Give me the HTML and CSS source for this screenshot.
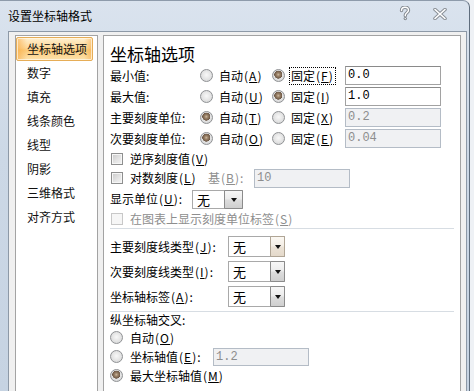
FILE: index.html
```html
<!DOCTYPE html>
<html lang="zh-CN">
<head>
<meta charset="utf-8">
<title>设置坐标轴格式</title>
<link rel="stylesheet" href="styles.css">
</head>
<body>
<div class="window">
  <div class="titlebar">
    <span class="title">设置坐标轴格式</span>
    <div class="caption">
      <svg class="help" width="12" height="15" viewBox="0 0 12 15">
        <path d="M2.5 4.5 C2.5 2 4.2 1.2 6 1.2 C8 1.2 9.5 2.5 9.5 4.3 C9.5 6.5 6.3 7 6.3 9.2 L6.3 9.8" fill="none" stroke="#858b92" stroke-width="3.4" stroke-linecap="round"/>
        <circle cx="6.3" cy="12.6" r="1.7" fill="#858b92"/>
        <path d="M2.5 4.5 C2.5 2 4.2 1.2 6 1.2 C8 1.2 9.5 2.5 9.5 4.3 C9.5 6.5 6.3 7 6.3 9.2 L6.3 9.8" fill="none" stroke="#fff" stroke-width="1.4" stroke-linecap="round"/>
        <circle cx="6.3" cy="12.6" r="0.7" fill="#fff"/>
      </svg>
      <svg class="close" width="14" height="12" viewBox="0 0 14 12">
        <path d="M2 1.5 L12 10.5 M12 1.5 L2 10.5" fill="none" stroke="#8a9097" stroke-width="3.6" stroke-linecap="round"/>
        <path d="M2 1.5 L12 10.5 M12 1.5 L2 10.5" fill="none" stroke="#fff" stroke-width="1.6" stroke-linecap="round"/>
      </svg>
    </div>
  </div>
  <div class="frame">
    <ul class="nav">
      <li class="active">坐标轴选项</li>
      <li>数字</li>
      <li>填充</li>
      <li>线条颜色</li>
      <li>线型</li>
      <li>阴影</li>
      <li>三维格式</li>
      <li>对齐方式</li>
    </ul>
    <div class="panel">
      <h1>坐标轴选项</h1>

      <div class="axrow">
        <span class="lbl">最小值:</span>
        <span class="opt opt1"><span class="radio"></span><span>自动<span class="mn">(<u>A</u>)</span></span></span>
        <span class="opt opt2"><span class="radio on"></span><span class="focus">固定<span class="mn">(<u>F</u>)</span></span></span>
        <span class="field">0.0</span>
      </div>
      <div class="axrow">
        <span class="lbl">最大值:</span>
        <span class="opt opt1"><span class="radio"></span><span>自动<span class="mn">(<u>U</u>)</span></span></span>
        <span class="opt opt2"><span class="radio on"></span><span>固定<span class="mn">(<u>I</u>)</span></span></span>
        <span class="field">1.0</span>
      </div>
      <div class="axrow">
        <span class="lbl">主要刻度单位:</span>
        <span class="opt opt1"><span class="radio on"></span><span>自动<span class="mn">(<u>T</u>)</span></span></span>
        <span class="opt opt2"><span class="radio"></span><span>固定<span class="mn">(<u>X</u>)</span></span></span>
        <span class="field disabled">0.2</span>
      </div>
      <div class="axrow">
        <span class="lbl">次要刻度单位:</span>
        <span class="opt opt1"><span class="radio on"></span><span>自动<span class="mn">(<u>O</u>)</span></span></span>
        <span class="opt opt2"><span class="radio"></span><span>固定<span class="mn">(<u>E</u>)</span></span></span>
        <span class="field disabled">0.04</span>
      </div>

      <div class="chkrow r1">
        <span class="chk"></span><span>逆序刻度值<span class="mn">(<u>V</u>)</span></span>
      </div>
      <div class="chkrow r2">
        <span class="chk"></span><span class="loglbl">对数刻度<span class="mn">(<u>L</u>)</span></span>
        <span class="baselbl dim">基<span class="mn">(<u>B</u>)</span>:</span>
        <span class="field disabled">10</span>
      </div>
      <div class="unitrow">
        <span class="unitlbl">显示单位<span class="mn">(<u>U</u>)</span>:</span>
        <span class="sel small"><span class="v">无</span><span class="btn"><span class="arrow"></span></span></span>
      </div>
      <div class="chkrow r4 dim">
        <span class="chk off"></span><span>在图表上显示刻度单位标签<span class="mn">(<u>S</u>)</span></span>
      </div>

      <div class="sep"></div>

      <div class="ticks">
        <div class="tickrow">
          <span class="ticklbl">主要刻度线类型<span class="mn">(<u>J</u>)</span>:</span>
          <span class="sel"><span class="v">无</span><span class="btn hot"><span class="arrow"></span></span></span>
        </div>
        <div class="tickrow">
          <span class="ticklbl">次要刻度线类型<span class="mn">(<u>I</u>)</span>:</span>
          <span class="sel"><span class="v">无</span><span class="btn"><span class="arrow"></span></span></span>
        </div>
        <div class="tickrow">
          <span class="ticklbl">坐标轴标签<span class="mn">(<u>A</u>)</span>:</span>
          <span class="sel"><span class="v">无</span><span class="btn"><span class="arrow"></span></span></span>
        </div>
      </div>

      <div class="sep second"></div>

      <div class="cross">
        <div class="crosshead">纵坐标轴交叉:</div>
        <div class="crossrow"><span class="radio"></span><span>自动<span class="mn">(<u>O</u>)</span></span></div>
        <div class="crossrow"><span class="radio"></span><span class="crosslbl">坐标轴值<span class="mn">(<u>E</u>)</span>:</span><span class="field disabled short">1.2</span></div>
        <div class="crossrow"><span class="radio on"></span><span>最大坐标轴值<span class="mn">(<u>M</u>)</span></span></div>
      </div>
    </div>
  </div>
</div>
</body>
</html>
```

FILE: styles.css
```css
html, body {
  margin: 0;
  padding: 0;
}
body {
  width: 474px;
  height: 391px;
  overflow: hidden;
  background: #eef1f5;
  font-family: "Noto Sans CJK SC", "Noto Sans", sans-serif;
  font-size: 12px;
  color: #000;
}
u {
  text-decoration: underline;
  text-underline-offset: 1px;
}
.mn {
  padding-left: 1px;
  letter-spacing: 1px;
}
.window {
  width: 470px;
  height: 391px;
  border-right: 1px solid #5f6d7d;
  border-top: 1px solid #8e9bab;
  box-sizing: border-box;
  border-top-right-radius: 7px;
  background: linear-gradient(180deg, #dae3ee 0%, #ccd8e6 40%, #c6d3e2 100%);
  overflow: hidden;
}
.titlebar {
  height: 30px;
  display: flex;
  align-items: center;
  padding-left: 8px;
  padding-right: 22px;
}
.title {
  font-size: 12px;
  line-height: 16px;
  color: #000;
}
.caption {
  margin-left: auto;
  display: flex;
  align-items: center;
  gap: 22px;
  margin-top: -5px;
}
.frame {
  margin-left: 8px;
  width: 459px;
  height: 420px;
  box-sizing: border-box;
  border: 1px solid #8d99a7;
  background: #f0f0f0;
  padding: 3px 5px 0 6px;
  display: flex;
  gap: 5px;
}
.nav {
  width: 83px;
  height: 420px;
  box-sizing: border-box;
  margin: 0;
  padding: 1px 4px 0 0;
  list-style: none;
  background: #fff;
  border: 1px solid #a3a3a3;
}
.nav li {
  height: 24px;
  line-height: 24px;
  padding-left: 11px;
  box-sizing: border-box;
  color: #111;
  white-space: nowrap;
}
.nav li.active {
  border: 1px solid #e6ad57;
  border-radius: 2px;
  padding-left: 10px;
  line-height: 22px;
  background:
    linear-gradient(90deg, rgba(247,165,60,0.6) 0, rgba(247,170,70,0) 10px, rgba(247,170,70,0) 67px, rgba(247,165,60,0.6) 77px),
    linear-gradient(180deg, #fff0d0 0%, #fdd796 45%, #fbca78 55%, #fde2ad 100%);
  box-shadow: inset 0 0 0 1px rgba(255,250,235,0.7);
}
.panel {
  width: 358px;
  height: 420px;
  box-sizing: border-box;
  background: #fff;
  border: 1px solid #a3a3a3;
  padding: 7px 0 0 6px;
}
h1 {
  margin: 0;
  font-size: 17px;
  line-height: 22px;
  font-weight: normal;
  color: #000;
}
.axrow {
  display: flex;
  align-items: center;
  height: 21px;
  line-height: 16px;
}
.lbl {
  width: 90px;
  white-space: nowrap;
}
.opt {
  display: flex;
  align-items: center;
  gap: 6px;
  white-space: nowrap;
}
.opt1 { width: 72px; }
.opt2 { width: 73px; }
.focus {
  outline: 1px dotted #000;
  outline-offset: 0;
  padding: 0 1px;
  margin-left: -1px;
}
.radio {
  flex: none;
  width: 13px;
  height: 13px;
  box-sizing: border-box;
  border-radius: 50%;
  border: 1px solid #8f9194;
  background: radial-gradient(circle at 50% 45%, #f8f8f8 0, #e9e9e9 40%, #cfd0d1 100%);
}
.radio.on {
  background:
    radial-gradient(circle at 48% 42%, #cdb9a2 0, #9c8368 1.6px, #7a6450 3.2px, #6a5543 3.8px, rgba(0,0,0,0) 4.2px),
    radial-gradient(circle at 50% 45%, #f8f8f8 0, #e6e6e6 45%, #cacbcc 100%);
}
.field {
  display: block;
  width: 96px;
  height: 19px;
  box-sizing: border-box;
  border: 1px solid #a2a2a2;
  border-top-color: #8a8a8a;
  background: #fff;
  padding-left: 2px;
  font-family: "Liberation Mono", "DejaVu Sans Mono", monospace;
  font-size: 12px;
  line-height: 17px;
  color: #000;
}
.field.disabled {
  background: #f0f1f3;
  border-color: #b4bcc6;
  color: #8d8d8d;
}
.chkrow {
  display: flex;
  align-items: center;
  line-height: 16px;
  white-space: nowrap;
}
.chkrow.r1 { height: 19px; }
.chkrow.r2 { height: 20px; }
.chkrow.r4 { height: 18px; }
.chk {
  flex: none;
  width: 12px;
  height: 12px;
  box-sizing: border-box;
  margin-left: 1px;
  margin-right: 7px;
  border: 1px solid #8e8f8f;
  background: linear-gradient(135deg, #c9c9c9 0%, #e4e4e4 55%, #f4f4f4 100%);
  box-shadow: inset 0 0 0 1px #f6f6f6;
}
.chk.off {
  border-color: #c8c8c8;
  background: #f6f6f6;
  box-shadow: none;
}
.dim {
  color: #8e8e8e;
}
.loglbl { width: 78px; }
.baselbl { width: 46px; }
.unitrow {
  display: flex;
  align-items: center;
  height: 22px;
  line-height: 16px;
  white-space: nowrap;
}
.unitlbl { width: 82px; }
.sel {
  display: flex;
  width: 57px;
  height: 21px;
  box-sizing: border-box;
  border: 1px solid #a9a9a9;
  background: #fff;
}
.sel.small {
  width: 51px;
  height: 19px;
}
.sel .v {
  flex: 1;
  padding-left: 4px;
  font-size: 13px;
  line-height: 19px;
}
.sel.small .v {
  line-height: 17px;
}
.sel .btn {
  width: 15px;
  box-sizing: border-box;
  border: 1px solid #8b8b8b;
  margin: -1px -1px -1px 0;
  border-radius: 1px;
  background: linear-gradient(180deg, #f7f7f7 0%, #ececec 45%, #dcdcdc 55%, #cfcfcf 100%);
  display: flex;
  align-items: center;
  justify-content: center;
}
.sel.small .btn {
  width: 19px;
}
.sel .btn.hot {
  border-color: #b0a595;
  background: linear-gradient(180deg, #fbf8f3 0%, #f4eee6 45%, #ebe2d6 55%, #e4d9ca 100%);
}
.arrow {
  width: 0;
  height: 0;
  border-left: 3.5px solid transparent;
  border-right: 3.5px solid transparent;
  border-top: 4px solid #111;
  margin-top: 1px;
}
.sep {
  height: 1px;
  margin-right: 6px;
  background: #d7dde3;
}
.sep.second {
  margin-top: 2px;
}
.ticks {
  padding-top: 5px;
}
.tickrow {
  display: flex;
  align-items: center;
  height: 25px;
  line-height: 16px;
  white-space: nowrap;
}
.ticklbl { width: 118px; }
.crosshead {
  height: 16px;
  line-height: 16px;
}
.crossrow {
  display: flex;
  align-items: center;
  gap: 7px;
  height: 19px;
  line-height: 16px;
  white-space: nowrap;
}
.crosslbl { width: 76px; }
.field.short {
  height: 18px;
  line-height: 16px;
}
```
